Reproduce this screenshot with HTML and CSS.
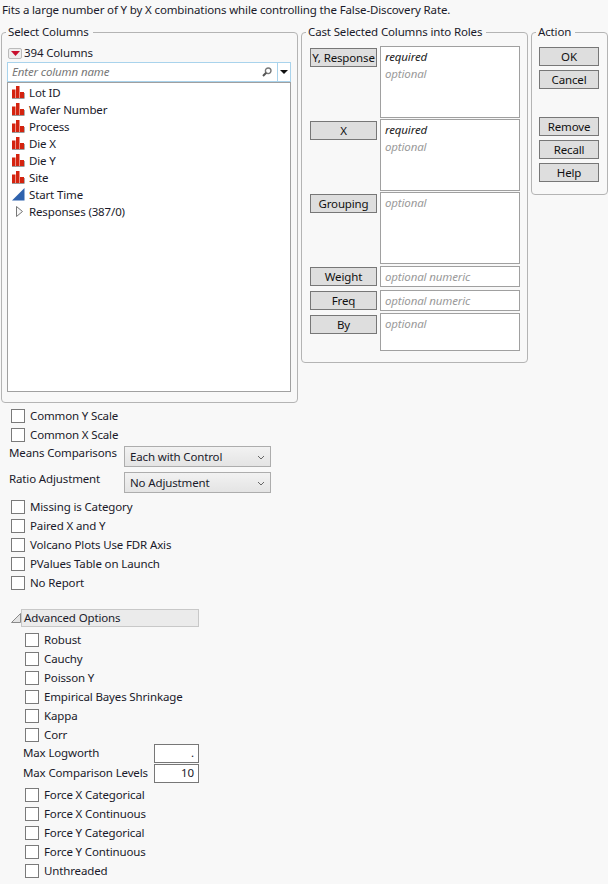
FILE: index.html
```html
<!DOCTYPE html>
<html lang="en">
<head>
<meta charset="utf-8">
<title>Response Screening</title>
<link rel="stylesheet" href="styles.css">
</head>
<body>
<svg class="defs" width="0" height="0" aria-hidden="true">
  <symbol id="nom" viewBox="0 0 13 13"><path fill="#d4230f" d="M0 3.500h3.500V12H0zM4 0h3.500v12H4zM8 6h4v6H8z"/><path fill="#9a9a9a" d="M0 12h12.500v1H0zM12 7h.8v5H12z"/></symbol>
  <symbol id="cont" viewBox="0 0 13 13"><path fill="#2f62ad" d="M0 12.500 12.500 0v12.500z"/></symbol>
</svg>
<p class="intro">Fits a large number of Y by X combinations while controlling the False-Discovery Rate.</p>
<div class="top">
  <fieldset class="group select">
    <legend>Select Columns</legend>
    <div class="count"><span class="redbtn"><svg width="9" height="5" viewBox="0 0 9 5"><path fill="#c8102e" d="M0 0h9L4.500 5z"/></svg></span>394 Columns</div>
    <div class="search">
      <span class="search-text">Enter column name</span>
      <svg class="lens" width="10" height="10" viewBox="0 0 10 10"><circle cx="6.200" cy="3.800" r="2.800" fill="none" stroke="#777" stroke-width="1.400"/><path d="M4.200 5.800 1 9" stroke="#555" stroke-width="2"/></svg>
      <span class="search-drop"><svg width="8" height="4" viewBox="0 0 8 4"><path d="M0 0h8L4 4z" fill="#111"/></svg></span>
    </div>
    <ul class="cols">
      <li><svg class="ci"><use href="#nom"/></svg>Lot ID</li>
      <li><svg class="ci"><use href="#nom"/></svg>Wafer Number</li>
      <li><svg class="ci"><use href="#nom"/></svg>Process</li>
      <li><svg class="ci"><use href="#nom"/></svg>Die X</li>
      <li><svg class="ci"><use href="#nom"/></svg>Die Y</li>
      <li><svg class="ci"><use href="#nom"/></svg>Site</li>
      <li><svg class="ci"><use href="#cont"/></svg>Start Time</li>
      <li><svg class="ci" viewBox="0 0 13 13"><path d="M4.500 1.500 10.500 6.500 4.500 11.500z" fill="#f8f8f8" stroke="#777"/></svg>Responses (387/0)</li>
    </ul>
  </fieldset>
  <fieldset class="group cast">
    <legend>Cast Selected Columns into Roles</legend>
    <div class="role"><span class="btn">Y, Response</span><div class="box h72"><i class="req">required</i><i>optional</i></div></div>
    <div class="role"><span class="btn">X</span><div class="box h72"><i class="req">required</i><i>optional</i></div></div>
    <div class="role wide"><span class="btn">Grouping</span><div class="box h72"><i>optional</i></div></div>
    <div class="role short wider"><span class="btn">Weight</span><div class="box h21"><i>optional numeric</i></div></div>
    <div class="role short wide"><span class="btn">Freq</span><div class="box h21"><i>optional numeric</i></div></div>
    <div class="role"><span class="btn">By</span><div class="box h38"><i>optional</i></div></div>
  </fieldset>
  <fieldset class="group action">
    <legend>Action</legend>
    <span class="btn">OK</span>
    <span class="btn">Cancel</span>
    <span class="btn spaced">Remove</span>
    <span class="btn">Recall</span>
    <span class="btn">Help</span>
  </fieldset>
</div>
<div class="options">
  <label class="chk"><span class="cb"></span>Common Y Scale</label>
  <label class="chk"><span class="cb"></span>Common X Scale</label>
  <div class="sel-row first"><span class="sel-label">Means Comparisons</span><span class="sel">Each with Control<svg width="8" height="5" viewBox="0 0 8 5"><path d="M1 1l3 3 3-3" fill="none" stroke="#666"/></svg></span></div>
  <div class="sel-row"><span class="sel-label">Ratio Adjustment</span><span class="sel">No Adjustment<svg width="8" height="5" viewBox="0 0 8 5"><path d="M1 1l3 3 3-3" fill="none" stroke="#666"/></svg></span></div>
  <label class="chk"><span class="cb"></span>Missing is Category</label>
  <label class="chk"><span class="cb"></span>Paired X and Y</label>
  <label class="chk"><span class="cb"></span>Volcano Plots Use FDR Axis</label>
  <label class="chk"><span class="cb"></span>PValues Table on Launch</label>
  <label class="chk"><span class="cb"></span>No Report</label>
</div>
<div class="adv-head"><svg width="10" height="10" viewBox="0 0 10 10"><path d="M9.500 .5v9h-9z" fill="#e4e4e4" stroke="#8a8a8a"/></svg><span class="adv-title">Advanced Options</span></div>
<div class="adv">
  <label class="chk"><span class="cb"></span>Robust</label>
  <label class="chk"><span class="cb"></span>Cauchy</label>
  <label class="chk"><span class="cb"></span>Poisson Y</label>
  <label class="chk"><span class="cb"></span>Empirical Bayes Shrinkage</label>
  <label class="chk"><span class="cb"></span>Kappa</label>
  <label class="chk"><span class="cb"></span>Corr</label>
  <div class="num-row"><span class="num-label">Max Logworth</span><span class="num">.</span></div>
  <div class="num-row"><span class="num-label">Max Comparison Levels</span><span class="num">10</span></div>
  <label class="chk first"><span class="cb"></span>Force X Categorical</label>
  <label class="chk"><span class="cb"></span>Force X Continuous</label>
  <label class="chk"><span class="cb"></span>Force Y Categorical</label>
  <label class="chk"><span class="cb"></span>Force Y Continuous</label>
  <label class="chk"><span class="cb"></span>Unthreaded</label>
</div>
</body>
</html>
```
FILE: styles.css
```css
* { box-sizing: border-box; }
html, body { margin: 0; padding: 0; }
body { width: 608px; height: 884px; overflow: hidden; background: #f8f8f8; color: #1a1a2a; font: 11.5px/16px "Noto Sans", "Open Sans", sans-serif; letter-spacing: -0.14px; }
.defs { position: absolute; }
.intro { margin: 0; padding: 2px 0 0 2px; height: 24px; white-space: nowrap; }
.top { display: flex; align-items: flex-start; }
.group { margin: 0; border: 1px solid #b4b4b4; border-radius: 4px; background: #f8f8f8; min-width: 0; }
.group legend { padding: 0 4px 0 2px; line-height: 16px; white-space: nowrap; }
.select { width: 297px; height: 379px; margin-left: 1px; padding: 0 6px 0 5px; }
.select legend { margin-left: -1px; }
.cast { width: 227px; height: 339px; margin-left: 3px; padding: 6px 7px 0 8px; }
.cast legend { margin-left: -4px; }
.action { width: 77px; height: 171px; margin-left: 3px; padding: 7px 7px 0 7px; display: flex; flex-direction: column; gap: 4px; }
.action legend { margin-left: -3px; }
.count { display: flex; align-items: center; height: 16px; margin: 5px 0 0 1px; }
.redbtn { width: 14px; height: 11px; border: 1px solid #bbb; border-radius: 2px; margin-right: 2px; background: #eee; display: flex; align-items: center; justify-content: center; }
.search { display: flex; align-items: center; height: 20px; margin-top: 1px; border: 1px solid #a9d3ec; background: #fff; }
.search-text { flex: 1; padding-left: 4px; font-style: italic; color: #777; }
.lens { margin-right: 5px; }
.search-drop { width: 13px; height: 18px; border-left: 1px solid #a9d3ec; display: flex; align-items: center; justify-content: center; }
.cols { list-style: none; margin: 0; padding: 1px 0 0 4px; height: 310px; border: 1px solid #a0a0a0; background: #fff; }
.cols li { display: flex; align-items: center; height: 17px; }
.ci { width: 13px; height: 13px; margin-right: 4px; flex: none; }
.btn { display: block; height: 19px; line-height: 17px; text-align: center; background: #dedede; border: 1px solid #777; white-space: nowrap; color: #111; }
.role { display: flex; align-items: flex-start; gap: 3px; margin-bottom: 1px; }
.role.wide { margin-bottom: 2px; }
.role.wider { margin-bottom: 3px; }
.role .btn { width: 67px; flex: none; margin-top: 2px; }
.role.short .btn { margin-top: 1px; }
.box { flex: 1; border: 1px solid #a0a0a0; background: #fff; padding: 2px 4px; display: flex; flex-direction: column; gap: 1px; }
.box i { display: block; color: #9a9a9a; white-space: nowrap; }
.box i.req { color: #222; }
.h72 { height: 72px; }
.h21 { height: 21px; }
.h38 { height: 38px; }
.action .btn { width: 60px; }
.action .btn.spaced { margin-top: 24px; }
.options { padding: 3px 0 0 11px; }
.chk { display: flex; align-items: center; height: 19px; white-space: nowrap; }
.cb { width: 14px; height: 14px; border: 1px solid #7a7a7a; background: #fff; margin-right: 5px; flex: none; }
.sel-row { display: flex; align-items: flex-start; height: 26px; margin-left: -2px; }
.sel-row.first { margin-top: 2px; }
.sel-row + .chk { margin-top: -1px; }
.sel-label { width: 115px; margin-top: -1px; white-space: nowrap; }
.sel { width: 147px; height: 21px; display: flex; align-items: center; justify-content: space-between; padding: 1px 5px 0; background: linear-gradient(#f2f2f2, #e4e4e4); border: 1px solid #adadad; }
.adv-head { display: flex; align-items: center; margin: 17px 0 0 11px; height: 18px; }
.adv-title { width: 178px; height: 18px; padding-left: 2px; background: #ebebeb; border: 1px solid #c8c8c8; line-height: 16px; }
.adv { padding: 3px 0 0 25px; }
.num-row { display: flex; justify-content: space-between; align-items: flex-start; width: 176px; height: 20px; margin-left: -2px; white-space: nowrap; }
.num-label { padding-top: 1px; }
.num { width: 45px; height: 19px; border: 1px solid #777; background: #fff; text-align: right; padding-right: 4px; }
.chk.first { margin-top: 1px; }
```
